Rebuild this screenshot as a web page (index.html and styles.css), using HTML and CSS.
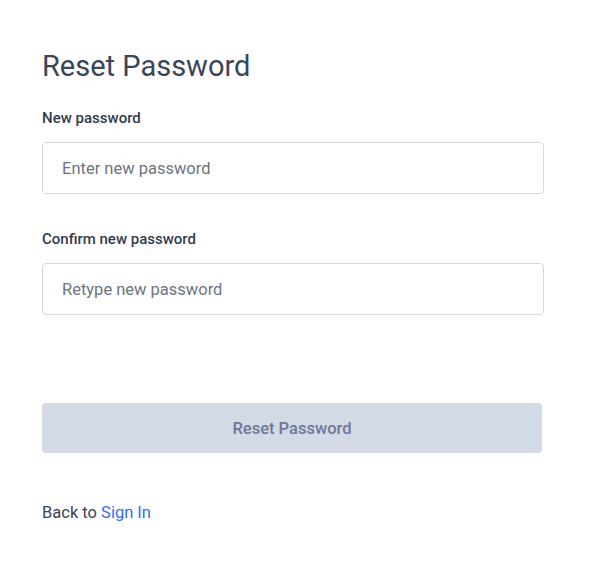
FILE: index.html
```html
<!DOCTYPE html>
<html>
<head>
<meta charset="utf-8">
<link rel="stylesheet" href="styles.css">
</head>
<body>
<main class="card">
  <h1 class="title">Reset Password</h1>
  <form class="form">
    <div class="field">
      <label class="label" for="np">New password</label>
      <input class="input" id="np" type="password" placeholder="Enter new password">
    </div>
    <div class="field">
      <label class="label" for="cp">Confirm new password</label>
      <input class="input" id="cp" type="password" placeholder="Retype new password">
    </div>
    <button class="btn" type="button">Reset Password</button>
  </form>
  <p class="back">Back to <a class="link" href="#">Sign In</a></p>
</main>
</body>
</html>
```
FILE: styles.css
```css
* { box-sizing: border-box; }
html, body { margin: 0; background: #fff; }
body {
  font-family: Roboto, "Liberation Sans", sans-serif;
  color: #3b4356;
}
.card {
  width: 502px;
  margin-left: 42px;
  padding-top: 46px;
}
.title {
  margin: 0;
  font-size: 29px;
  font-weight: 400;
  line-height: 40px;
  color: #3b4559;
}
.form {
  display: flex;
  flex-direction: column;
}
.field {
  display: flex;
  flex-direction: column;
  margin-top: 22px;
}
.field + .field { margin-top: 35px; }
.label {
  font-size: 15px;
  font-weight: 500;
  line-height: 20px;
  color: #333b4d;
  margin-bottom: 14px;
}
.input {
  height: 52px;
  border: 1px solid #d3d7e3;
  border-radius: 4px;
  padding: 0 19px;
  font-family: inherit;
  font-size: 16.5px;
  color: #3b4356;
  outline: none;
}
.input::placeholder { color: #6e7380; }
.btn {
  margin-top: 88px;
  width: 500px;
  height: 50px;
  border: none;
  border-radius: 4px;
  background: #d4d9e6;
  color: #6f7898;
  font-family: inherit;
  font-size: 16.5px;
  font-weight: 500;
}
.back {
  margin: 50px 0 0;
  font-size: 16.5px;
  line-height: 20px;
  color: #3b4356;
}
.link {
  color: #2f6ef4;
  text-decoration: none;
}
```
